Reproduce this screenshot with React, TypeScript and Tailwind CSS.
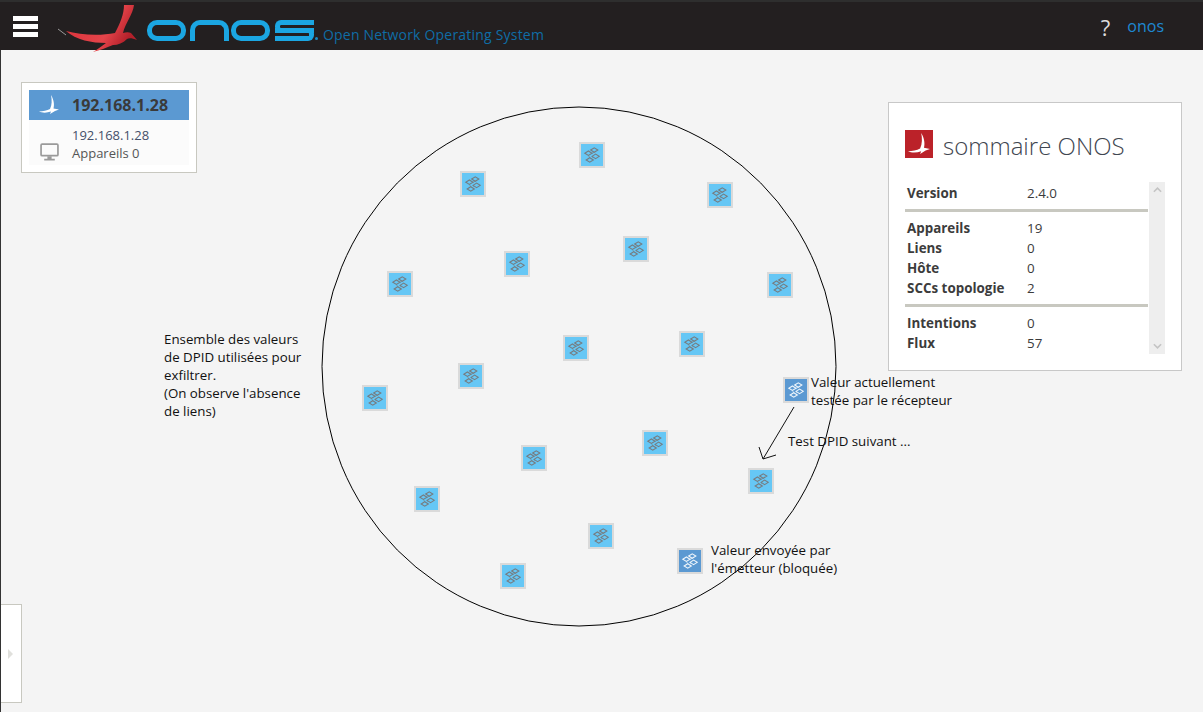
const NODES = [
  { x: 592, y: 155 },
  { x: 473, y: 184 },
  { x: 720, y: 195 },
  { x: 636, y: 249 },
  { x: 517, y: 264 },
  { x: 400, y: 284 },
  { x: 780, y: 285 },
  { x: 576, y: 348 },
  { x: 692, y: 344 },
  { x: 471, y: 376 },
  { x: 375, y: 398 },
  { x: 796, y: 390, active: true },
  { x: 655, y: 443 },
  { x: 534, y: 458 },
  { x: 761, y: 481 },
  { x: 427, y: 499 },
  { x: 601, y: 536 },
  { x: 690, y: 561, active: true },
  { x: 513, y: 576 },
];

const NOTES = [
  { x: 164, y: 330, lines: ['Ensemble des valeurs', 'de DPID utilisées pour', 'exfiltrer.', "(On observe l'absence", 'de liens)'] },
  { x: 811, y: 373, lines: ['Valeur actuellement', 'testée par le récepteur'] },
  { x: 788, y: 432, lines: ['Test DPID suivant ...'] },
  { x: 711, y: 541, lines: ['Valeur envoyée par', "l'émetteur (bloquée)"] },
];

const SUMMARY = [
  [['Version', '2.4.0']],
  [['Appareils', '19'], ['Liens', '0'], ['Hôte', '0'], ['SCCs topologie', '2']],
  [['Intentions', '0'], ['Flux', '57']],
];

function Bird({ className }: { className: string }) {
  return (
    <svg viewBox="0 0 20 20" className={className} fill="currentColor">
      <path d="M0 16.5C4 16.5 8 15.5 11 14C13 10 13 5 12 0C15 5 15.5 10 14.5 13.5L20 14.5L16 16L11 19L12 16.5C8 18 3 18 0 16.5Z" />
    </svg>
  );
}

function HeaderBird() {
  return (
    <svg viewBox="0 0 84 50" className="absolute left-[56px] top-0 w-[84px] h-[50px]">
      <defs>
        <linearGradient id="birdRed" x1="0" y1="0" x2="1" y2="0.4">
          <stop offset="0" stopColor="#d92f38" />
          <stop offset="0.7" stopColor="#e5444a" />
          <stop offset="1" stopColor="#b3202a" />
        </linearGradient>
      </defs>
      <path d="M2 27L10 33" stroke="#9a9a9a" strokeWidth="1" />
      <path
        d="M10 29C24 33 44 34 59 31C64 22 68 12 68 3L78 3C77 12 69 22 67 31C70 30 73 30 75 31L81 38C76 36 73 36 71 37C67 41 62 43 57 43C50 46 44 48 37 50C42 47 46 44 50 41C36 41 20 38 10 29Z"
        fill="url(#birdRed)"
      />
    </svg>
  );
}

// wordmark built from css shapes
function Wordmark() {
  const ring = 'w-[39px] h-[21px] border-[5px] border-[#1ba6e2] rounded-[10px]';
  return (
    <div className="flex items-start h-[21px]" aria-label="ONOS">
      <div className={ring} />
      <div className="ml-[4px] w-[39px] h-[21px] border-[5px] border-b-0 border-[#1ba6e2] rounded-t-[10px]" />
      <div className={`ml-[2px] ${ring}`} />
      <div className="ml-[5px] w-[39px] h-[21px] relative">
        <div className="absolute left-0 top-0 w-[39px] h-[13px] border-[5px] border-r-0 border-[#1ba6e2] rounded-l-[6px]" />
        <div className="absolute right-0 bottom-0 w-[39px] h-[13px] border-[5px] border-l-0 border-[#1ba6e2] rounded-r-[6px]" />
      </div>
      <div className="ml-[1px] mt-[17px] w-[3px] h-[3px] rounded-full bg-[#1b8ac4]" />
    </div>
  );
}

function DeviceGlyph({ className }: { className: string }) {
  return (
    <svg viewBox="0 0 20 20" className={className} fill="none" stroke="currentColor" strokeWidth="1.2">
      <path d="M8.5 4.5L12.5 2L16.5 4.5L12.5 7Z" />
      <path d="M2 8L6 5.5L10 8L6 10.5Z" />
      <path d="M10 11.5L14 9L18 11.5L14 14Z" />
      <path d="M3.5 15.5L7.5 13L11.5 15.5L7.5 18Z" />
      <path d="M10 8L12.5 7M7.5 13L6 10.5M10 13.5L11 12.5" strokeWidth="0.7" />
    </svg>
  );
}

function DeviceNode({ x, y, active }: { x: number; y: number; active?: boolean }) {
  return (
    <div
      className={`absolute w-[26px] h-[26px] border-[2px] border-[#dadada] flex items-center justify-center ${
        active ? 'bg-[#5b99d2] text-[#eef5fb]' : 'bg-[#66c7f5] text-[#767c80]'
      }`}
      style={{ left: x - 13, top: y - 63 }}
    >
      <DeviceGlyph className="w-[18px] h-[18px]" />
    </div>
  );
}

export default function App() {
  return (
    <div className="w-full h-screen flex flex-col overflow-hidden bg-[#f4f4f4] font-['Open_Sans',sans-serif]">
      <header className="relative h-[50px] shrink-0 flex items-center bg-[#231f20] border-t-2 border-[#2e2e2e]">
        <div className="ml-[13px] w-[25px] flex flex-col gap-[3px]">
          <div className="h-[5px] bg-white" />
          <div className="h-[5px] bg-white" />
          <div className="h-[5px] bg-white" />
        </div>
        <HeaderBird />
        <div className="ml-[109px] mt-[9px]">
          <Wordmark />
        </div>
        <span className="ml-[5px] mt-[17px] text-[14px] leading-none tracking-[0.2px] text-[#0f6da6]">
          Open Network Operating System
        </span>
        <span className="ml-auto text-[22px] leading-none text-[#dcdcdc] mt-[2px]">?</span>
        <span className="ml-[17px] mr-[39px] text-[16px] leading-none text-[#1e88d2] mt-[-1px]">onos</span>
      </header>

      <main className="relative flex-1 border-l border-[#333]">
        <div className="absolute left-[20px] top-[32px] w-[176px] h-[91px] bg-white border border-[#c8c8c0] p-[7px]">
          <div className="h-[30px] flex items-center bg-[#5b99d2]">
            <Bird className="ml-[10px] w-[20px] h-[20px] text-white" />
            <span className="ml-[13px] text-[16px] font-bold text-[#3a3a3a]">192.168.1.28</span>
          </div>
          <div className="h-[45px] flex bg-[#fbfbfb]">
            <svg viewBox="0 0 18 17" className="ml-[11px] mt-[23px] w-[19px] h-[18px]">
              <rect x="1" y="1" width="16" height="11" rx="1" fill="none" stroke="#9a9a9a" strokeWidth="1.6" />
              <path d="M7 12.5H11V15H14V16.5H4V15H7Z" fill="#9a9a9a" />
            </svg>
            <div className="ml-[13px] mt-[6px] text-[13px] leading-[18px]">
              <div className="text-[#45506a]">192.168.1.28</div>
              <div className="text-[#555]">Appareils 0</div>
            </div>
          </div>
        </div>

        <svg className="absolute left-0 top-0 w-[1202px] h-[662px]" viewBox="1 50 1202 662" fill="none">
          <ellipse cx="579" cy="366.5" rx="257" ry="259.5" stroke="#000" strokeWidth="1" />
          <path d="M794 407L763 459M759 447L763 459L776 455" stroke="#111" strokeWidth="1" />
        </svg>

        {NODES.map((n) => (
          <DeviceNode key={`${n.x}-${n.y}`} x={n.x - 1} y={n.y} active={n.active} />
        ))}

        {NOTES.map((note) => (
          <div
            key={note.x}
            className="absolute text-[13.3px] leading-[18px] text-[#111] whitespace-nowrap"
            style={{ left: note.x - 1, top: note.y - 50 }}
          >
            {note.lines.map((line) => (
              <div key={line}>{line}</div>
            ))}
          </div>
        ))}

        <div className="absolute left-[887px] top-[52px] w-[294px] h-[269px] bg-white border border-[#c8c8c8] pl-[16px] pt-[27px]">
          <div className="flex items-start h-[30px]">
            <div className="w-[28px] h-[28px] bg-[#bb2229] flex items-center justify-center">
              <Bird className="w-[22px] h-[22px] text-white" />
            </div>
            <span className="ml-[10px] mt-[4px] text-[24px] font-light leading-none text-[#3f4650]">sommaire ONOS</span>
          </div>
          <div className="flex mt-[24px]">
            <div className="w-[243px] text-[13.4px] text-[#3c3c3c]">
              {SUMMARY.map((group, i) => (
                <div
                  key={group[0][0]}
                  className={i < SUMMARY.length - 1 ? 'border-b-[3px] border-[#c8c8c0] pb-[5px] mb-[7px]' : ''}
                >
                  {group.map(([label, value]) => (
                    <div key={label} className="flex h-[20px] pb-[2px] items-center">
                      <span className="w-[122px] pl-[2px] font-bold">{label}</span>
                      <span>{value}</span>
                    </div>
                  ))}
                </div>
              ))}
            </div>
            <div className="w-[16px] h-[172px] mt-[-2px] ml-[1px] bg-[#eeeeee] flex flex-col items-center justify-between py-[5px] text-[#c4c4c4]">
              <svg viewBox="0 0 10 6" className="w-[9px] h-[6px]" fill="none" stroke="currentColor" strokeWidth="1.8">
                <path d="M1 5L5 1L9 5" />
              </svg>
              <svg viewBox="0 0 10 6" className="w-[9px] h-[6px]" fill="none" stroke="currentColor" strokeWidth="1.8">
                <path d="M1 1L5 5L9 1" />
              </svg>
            </div>
          </div>
        </div>

        <div className="absolute left-0 top-[554px] w-[21px] h-[99px] bg-white border border-l-0 border-[#c8c8c0] flex items-center pl-[7px]">
          <div className="w-0 h-0 border-y-[5px] border-y-transparent border-l-[5px] border-l-[#e0e0dc]" />
        </div>
      </main>
    </div>
  );
}
